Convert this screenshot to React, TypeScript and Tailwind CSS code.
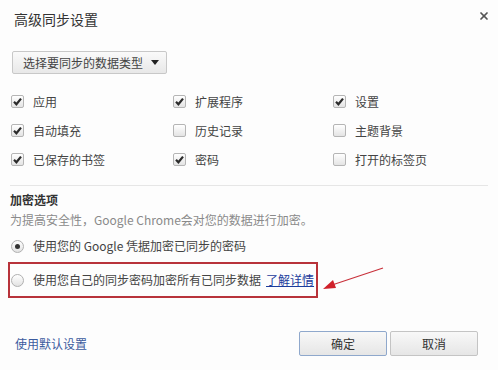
import { X } from "lucide-react";

interface SyncItem {
  label: string;
  checked: boolean;
}

const items: SyncItem[] = [
  { label: "应用", checked: true },
  { label: "扩展程序", checked: true },
  { label: "设置", checked: true },
  { label: "自动填充", checked: true },
  { label: "历史记录", checked: false },
  { label: "主题背景", checked: false },
  { label: "已保存的书签", checked: true },
  { label: "密码", checked: true },
  { label: "打开的标签页", checked: false },
];

function Checkbox({ checked }: { checked: boolean }) {
  return (
    <span className="flex h-[13px] w-[13px] shrink-0 items-center justify-center rounded-[2px] border border-[#b5b5b5] bg-gradient-to-b from-[#ffffff] to-[#e4e4e4]">
      {checked && (
        <svg width="11" height="11" viewBox="0 0 11 11">
          <path d="M2 5.8 L4.4 8.3 L9 2.6" fill="none" stroke="#2b2b2b" strokeWidth="2.2" />
        </svg>
      )}
    </span>
  );
}

function Radio({ selected }: { selected: boolean }) {
  return (
    <span className="flex h-[13px] w-[13px] shrink-0 items-center justify-center rounded-full border border-[#b0b0b0] bg-gradient-to-b from-[#ffffff] to-[#e2e2e2]">
      {selected && <span className="h-[5px] w-[5px] rounded-full bg-[#333]" />}
    </span>
  );
}

export default function App() {
  return (
    <div className="relative h-[370px] w-[498px] overflow-hidden bg-[#fdfdfd] font-['Microsoft_YaHei','Noto_Sans_CJK_SC',sans-serif] text-[#444]">
      <div className="flex items-start justify-between pl-[14px] pr-[8px] pt-[9px]">
        <h1 className="text-[14px] leading-[20px] text-[#333]">高级同步设置</h1>
        <X className="mt-[1px] h-[12px] w-[12px] text-[#555]" strokeWidth={3.5} />
      </div>

      <button className="ml-[12px] mt-[22px] flex h-[23px] w-[155px] items-center justify-between rounded-[2px] border border-[#c8c8c8] bg-gradient-to-b from-[#fafafa] to-[#e8e8e8] pl-[10px] pr-[7px] text-[12px] text-[#444]">
        <span>选择要同步的数据类型</span>
        <svg width="8" height="5" viewBox="0 0 8 5">
          <path d="M0 0 H8 L4 5 Z" fill="#222" />
        </svg>
      </button>

      <div className="mt-[13px] grid grid-cols-[162px_160px_1fr] pl-[11px]">
        {items.map((item) => (
          <label key={item.label} className="flex h-[29px] items-center gap-[9px] text-[12px]">
            <Checkbox checked={item.checked} />
            <span>{item.label}</span>
          </label>
        ))}
      </div>

      <div className="mx-[10px] mt-[11px] border-t border-[#e6e6e6]" />

      <div className="px-[10px]">
        <h2 className="mt-[6px] text-[12px] font-bold leading-[16px] text-[#333]">加密选项</h2>
        <p className="mt-[4px] text-[12px] leading-[16px] text-[#8a8a8a]">
          为提高安全性，Google Chrome会对您的数据进行加密。
        </p>
      </div>

      <div className="mt-[7px] flex h-[22px] items-center gap-[9px] pl-[11px] text-[12px]">
        <Radio selected />
        <span>使用您的 Google 凭据加密已同步的密码</span>
      </div>

      <div className="ml-[8px] mt-[5px] flex h-[36px] w-[310px] items-center gap-[9px] border-2 border-[#b8333a] pl-[1px] text-[12px]">
        <Radio selected={false} />
        <span>
          使用您自己的同步密码加密所有已同步数据
          <a className="ml-[5px] text-[#1c3c9c] underline">了解详情</a>
        </span>
      </div>

      <div className="mt-[33px] flex items-center justify-between pl-[15px] pr-[20px]">
        <a className="text-[12px] text-[#3b5b9e]">使用默认设置</a>
        <div className="flex gap-[3px]">
          <button className="h-[25px] w-[88px] rounded-[2px] border border-[#8fa8cc] bg-gradient-to-b from-[#f8f8f8] to-[#e6e6e6] text-[12px] text-[#333]">
            确定
          </button>
          <button className="h-[25px] w-[88px] rounded-[2px] border border-[#c4c4c4] bg-gradient-to-b from-[#f8f8f8] to-[#e6e6e6] text-[12px] text-[#333]">
            取消
          </button>
        </div>
      </div>

      <svg className="absolute left-0 top-0" width="498" height="370" viewBox="0 0 498 370">
        <line x1="383" y1="268" x2="332" y2="285" stroke="#c8303a" strokeWidth="1.3" />
        <path d="M323 289 L333 280 L336 288 Z" fill="#d0202a" />
      </svg>
    </div>
  );
}
